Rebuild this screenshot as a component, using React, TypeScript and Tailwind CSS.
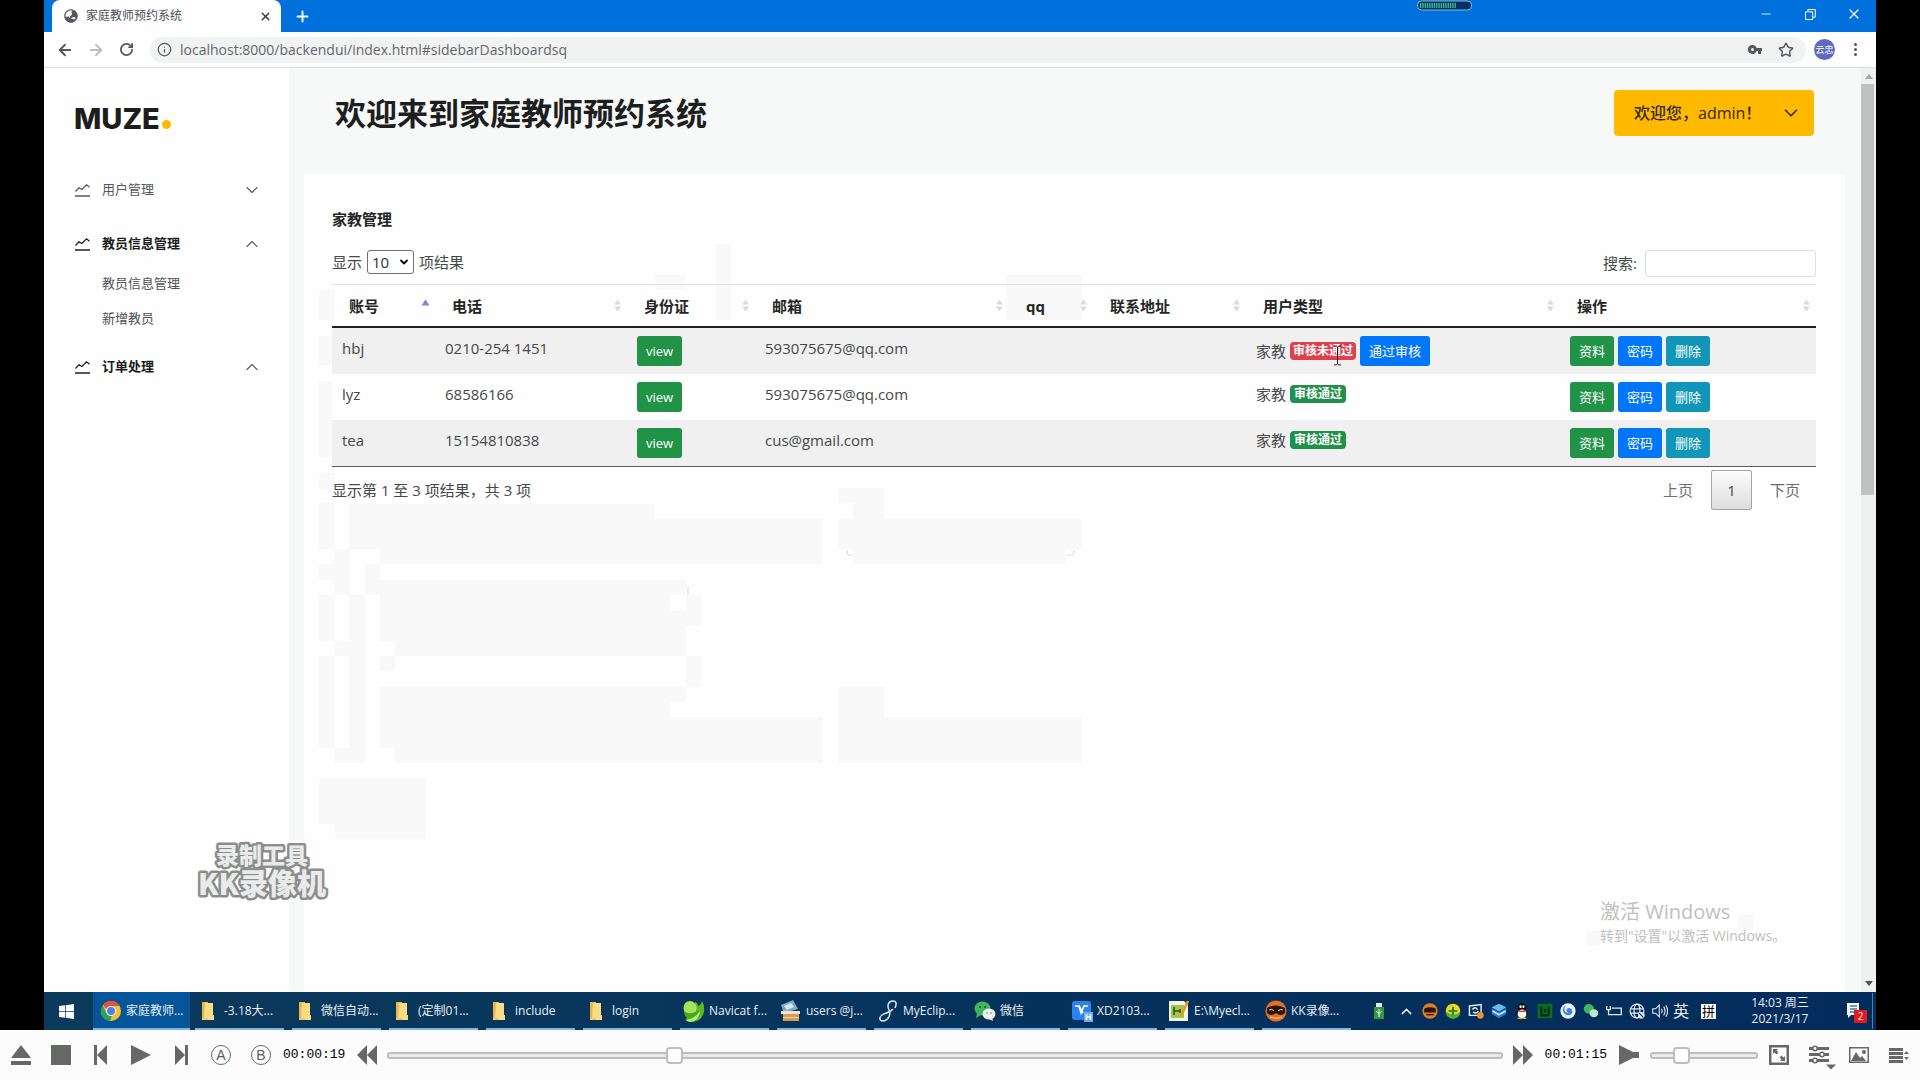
import React from "react";
import {
  ArrowLeft,
  ArrowRight,
  RotateCw,
  Info,
  Plus,
  X,
  Minus,
  Star,
  ChevronDown,
  ChevronUp,
} from "lucide-react";
import { FaWindows, FaGlobeAsia } from "react-icons/fa";

/* ---------- Browser window ---------- */

function TitleBar() {
  return (
    <div className="relative flex h-8 shrink-0 items-stretch bg-[#0070dd] pl-2">
      <div className="flex w-[229px] items-center rounded-t-lg bg-[#fdfefd] pl-3 pr-2">
        <FaGlobeAsia className="size-[14px] text-[#55585c]" />
        <span className="ml-2 flex-1 text-xs text-[#4b4f54]">家庭教师预约系统</span>
        <button aria-label="关闭标签页" className="flex size-4 items-center justify-center text-[#3c4043]">
          <X size={13} strokeWidth={2.8} />
        </button>
      </div>
      <button aria-label="新标签页" className="ml-[11px] flex w-5 items-center justify-center text-white">
        <Plus size={17} strokeWidth={2.6} />
      </button>
      <svg className="absolute left-[1373px] top-0" width="55" height="11" viewBox="0 0 55 11" aria-hidden="true">
        <rect x="0.5" y="1" width="54" height="9" rx="4" fill="#06305f" stroke="#7fb7e6" />
        {Array.from({ length: 16 }, (_, i) => (
          <rect key={i} x={3 + i * 2.3} y="3" width="1.3" height="5" fill="#37c98a" />
        ))}
      </svg>
      <div className="ml-auto flex items-center pb-1 text-white">
        <button aria-label="最小化" className="flex w-11 justify-center">
          <Minus size={14} strokeWidth={1.4} />
        </button>
        <button aria-label="还原" className="flex w-11 justify-center">
          <svg width="11" height="11" viewBox="0 0 11 11" fill="none" stroke="currentColor">
            <path d="M.5 2.800h7.200v7.700H.5zM2.800 2.600V.5h7.500v7.700H8" />
          </svg>
        </button>
        <button aria-label="关闭" className="flex w-11 justify-center">
          <X size={16} strokeWidth={1.8} />
        </button>
      </div>
    </div>
  );
}

function AddressBar() {
  return (
    <div className="flex h-9 shrink-0 items-center border-b border-[#dcdfe0] bg-[#fdfefd] pl-3 pr-[11px] text-[#55585c]">
      <button aria-label="后退" className="flex w-[18px] justify-center">
        <ArrowLeft size={18} strokeWidth={2.4} />
      </button>
      <button aria-label="前进" className="ml-[13px] flex w-[18px] justify-center text-[#bbbdbe]">
        <ArrowRight size={18} strokeWidth={2.4} />
      </button>
      <button aria-label="刷新" className="ml-3 flex w-[18px] justify-center">
        <RotateCw size={15} strokeWidth={2.8} />
      </button>
      <div className="ml-[15px] flex h-[26px] flex-1 items-center rounded-full bg-[#f1f3f3] pr-1 pl-[7px]">
        <Info size={15} strokeWidth={2} />
        <input
          aria-label="地址"
          defaultValue="localhost:8000/backendui/index.html#sidebarDashboardsq"
          className="ml-2 flex-1 bg-transparent text-sm text-[#63676b] outline-none"
        />
        <svg width="14" height="9" viewBox="0 0 14 9" aria-hidden="true">
          <path
            d="M4.500 0a4.500 4.500 0 1 0 4.100 6H10v3h3V6h1V3H8.600A4.500 4.500 0 0 0 4.500 0zm0 3a1.500 1.500 0 1 1 0 3 1.500 1.500 0 0 1 0-3z"
            fill="currentColor"
            fillRule="evenodd"
          />
        </svg>
        <Star size={16} strokeWidth={2.2} className="ml-4 mr-2" />
      </div>
      <span className="ml-2 flex size-[21px] items-center justify-center rounded-full bg-[#5c6bc0] text-[9px] leading-none text-white">
        云忠
      </span>
      <button aria-label="菜单" className="ml-[10px] flex w-5 flex-col items-center gap-0.5">
        <span className="size-[3px] rounded-full bg-[#55585c]" />
        <span className="size-[3px] rounded-full bg-[#55585c]" />
        <span className="size-[3px] rounded-full bg-[#55585c]" />
      </button>
    </div>
  );
}

/* ---------- Sidebar ---------- */

function TrendIcon() {
  return (
    <svg width="15" height="13" viewBox="0 0 15 13" fill="none" stroke="currentColor" aria-hidden="true">
      <path d="M.5 7.500 4 3.800l3 1.700L11.500.8l3 2.400" strokeWidth="1.200" />
      <path d="M0 12h15" strokeWidth="1.500" />
    </svg>
  );
}

function NavItem({ label, open, active }: { label: string; open: boolean; active: boolean }) {
  return (
    <button
      className={
        active
          ? "flex h-6 w-full items-center text-left text-[13px] font-bold text-[#1b1d1c]"
          : "flex h-6 w-full items-center text-left text-[13px] text-[#55595a]"
      }
    >
      <TrendIcon />
      <span className="ml-3 flex-1">{label}</span>
      {open ? (
        <ChevronUp size={20} strokeWidth={1.3} className="text-[#55595a]" />
      ) : (
        <ChevronDown size={20} strokeWidth={1.3} className="text-[#55595a]" />
      )}
    </button>
  );
}

function Sidebar() {
  return (
    <nav className="w-[245px] shrink-0 bg-[#fdfefd] pl-[31px] pr-[27px]">
      <div className="-ml-px flex items-end pt-9">
        <span className="font-['Inter'] text-[29px] leading-[30px] font-extrabold text-[#1c1e1d]">MUZE</span>
        <span className="mb-[5px] ml-0.5 size-[9px] rounded-full bg-[#ffba00]" />
      </div>
      <div className="mt-11">
        <NavItem label="用户管理" open={false} active={false} />
      </div>
      <div className="mt-[30px]">
        <NavItem label="教员信息管理" open active />
        <ul className="mt-[15px] ml-[27px] text-[13px] text-[#4d5152]">
          <li>
            <a href="#list" className="block h-6 leading-6">教员信息管理</a>
          </li>
          <li className="mt-[11px]">
            <a href="#add" className="block h-6 leading-6">新增教员</a>
          </li>
        </ul>
      </div>
      <div className="mt-[25px]">
        <NavItem label="订单处理" open active />
      </div>
    </nav>
  );
}

/* ---------- Table ---------- */

type Sort = "asc" | "both";

function SortMark({ sort }: { sort: Sort }) {
  return sort === "asc" ? (
    <svg width="9" height="15" viewBox="0 0 9 15" aria-hidden="true">
      <path d="M.5 7.500h8l-4-6z" fill="#8085d0" />
    </svg>
  ) : (
    <svg width="9" height="15" viewBox="0 0 9 15" aria-hidden="true">
      <path d="M1 6.500h7l-3.500-5zM1 8.500h7l-3.500 5z" fill="#dadcdb" />
    </svg>
  );
}

const columns: { name: string; width: string; sort: Sort }[] = [
  { name: "账号", width: "w-[103px]", sort: "asc" },
  { name: "电话", width: "w-[192px]", sort: "both" },
  { name: "身份证", width: "w-[128px]", sort: "both" },
  { name: "邮箱", width: "w-[254px]", sort: "both" },
  { name: "qq", width: "w-[84px]", sort: "both" },
  { name: "联系地址", width: "w-[153px]", sort: "both" },
  { name: "用户类型", width: "w-[314px]", sort: "both" },
  { name: "操作", width: "w-auto", sort: "both" },
];

const rows = [
  { account: "hbj", phone: "0210-254 1451", mail: "593075675@qq.com", passed: false },
  { account: "lyz", phone: "68586166", mail: "593075675@qq.com", passed: true },
  { account: "tea", phone: "15154810838", mail: "cus@gmail.com", passed: true },
];

const tones = {
  green: "block h-[30px] rounded-[3px] bg-[#209347] px-[9px] text-[13px] leading-[30px] whitespace-nowrap text-white",
  blue: "block h-[30px] rounded-[3px] bg-[#0076fb] px-[9px] text-[13px] leading-[30px] whitespace-nowrap text-white",
  teal: "block h-[30px] rounded-[3px] bg-[#1196b8] px-[9px] text-[13px] leading-[30px] whitespace-nowrap text-white",
};

function Btn({ tone, children }: { tone: keyof typeof tones; children: React.ReactNode }) {
  return <button className={tones[tone]}>{children}</button>;
}

function TeacherTable() {
  return (
    <table className="mt-[7px] w-full table-fixed border-separate border-spacing-0 border-b border-[#5b5d5c] text-[15px] leading-6 text-[#454948]">
      <thead>
        <tr>
          {columns.map((c) => (
            <th
              key={c.name}
              className={`${c.width} h-11 border-t border-b-2 border-t-[#dfe1e0] border-b-[#1f2120] p-0 text-left text-[#232625]`}
            >
              <div className="flex items-center justify-between pr-[5px] pl-[17px]">
                <span>{c.name}</span>
                <SortMark sort={c.sort} />
              </div>
            </th>
          ))}
        </tr>
      </thead>
      <tbody className="[&_td]:h-[46px] [&_td]:px-[10px] [&_td]:pt-2 [&_td]:pb-2 [&_td]:align-top">
        {rows.map((r, i) => (
          <tr key={r.account} className={i % 2 === 0 ? "bg-[#eff0ef]" : "bg-[#fdfefd]"}>
            <td>{r.account}</td>
            <td>{r.phone}</td>
            <td>
              <Btn tone="green">view</Btn>
            </td>
            <td>{r.mail}</td>
            <td />
            <td />
            <td>
              <div className="flex items-center gap-1">
                <span>家教</span>
                {r.passed ? (
                  <span className="rounded bg-[#20914a] px-1 text-[12px] leading-[18px] font-bold whitespace-nowrap text-white">审核通过</span>
                ) : (
                  <>
                    <span className="rounded bg-[#e0404d] px-[3px] text-[12px] leading-[18px] font-bold whitespace-nowrap text-white">审核未通过</span>
                    <Btn tone="blue">通过审核</Btn>
                  </>
                )}
              </div>
            </td>
            <td>
              <div className="flex gap-1">
                <Btn tone="green">资料</Btn>
                <Btn tone="blue">密码</Btn>
                <Btn tone="teal">删除</Btn>
              </div>
            </td>
          </tr>
        ))}
      </tbody>
    </table>
  );
}

/* Faint shading behind the panel's content */
const patches: [number, number, number, number][] = [
  [319, 290, 335, 320], [319, 336, 335, 365], [319, 381, 335, 457], [319, 473, 335, 489],
  [319, 503, 335, 549], [349, 504, 655, 519], [349, 519, 822, 549], [380, 549, 822, 564],
  [335, 549, 349, 595], [319, 564, 335, 580], [365, 564, 380, 595],
  [380, 580, 686, 595], [380, 595, 670, 611], [380, 611, 686, 641], [395, 641, 686, 656],
  [319, 595, 335, 641], [349, 595, 365, 763], [335, 641, 349, 656], [319, 656, 335, 748],
  [335, 748, 349, 763], [686, 595, 701, 626], [686, 656, 701, 687], [380, 656, 395, 671],
  [380, 687, 686, 702], [380, 702, 670, 717], [380, 717, 822, 748], [395, 748, 822, 763],
  [838, 488, 884, 503], [853, 503, 884, 519], [838, 519, 1082, 549], [853, 549, 1066, 564],
  [838, 687, 884, 717], [838, 717, 1082, 763], [319, 778, 426, 824], [335, 824, 426, 839],
  [716, 244, 731, 320], [655, 275, 685, 290], [1006, 275, 1082, 320],
  [1587, 931, 1600, 946], [1738, 915, 1753, 931],
];

function Patches() {
  return (
    <svg className="pointer-events-none absolute top-0 left-0" width="1541" height="818" viewBox="304 174 1541 818" aria-hidden="true">
      {patches.map(([a, b, c, d]) => (
        <rect key={`${a}-${b}`} x={a} y={b} width={c - a} height={d - b} fill="#f8f9f8" />
      ))}
      <path d="M847 550v3q0 2 2 2h3M1074 550v3q0 2-2 2h-5M688 586v9" fill="none" stroke="#d9dbda" />
    </svg>
  );
}

function Content() {
  return (
    <main className="flex min-w-0 flex-1 flex-col bg-[#f7f8f8] pl-[15px]">
      <header className="flex h-[106px] shrink-0 items-start justify-between pr-[47px] pl-[31px]">
        <h1 className="mt-[25px] text-[31px] leading-10 font-bold text-[#1d1f1e]">欢迎来到家庭教师预约系统</h1>
        <button className="mt-[22px] flex h-[46px] w-[200px] items-center justify-between rounded bg-[#ffba00] pr-3 pl-5 text-[16px] font-medium text-[#33290a]">
          <span>欢迎您，admin！</span>
          <ChevronDown size={22} strokeWidth={1.8} />
        </button>
      </header>
      <section className="relative mr-4 flex-1 bg-[#fdfefd] pt-[33px] pr-[29px] pl-7 text-[15px] text-[#454948]">
        <Patches />
        <div className="relative">
          <h2 className="text-[15px] leading-6 font-bold text-[#232625]">家教管理</h2>
          <div className="mt-[19px] flex items-start justify-between">
            <label className="flex items-center gap-[5px]">
              显示
              <span className="relative flex">
                <select
                  defaultValue="10"
                  className="h-6 w-[47px] appearance-none rounded-[3px] border border-[#6f7271] bg-[#fdfefd] pl-1 text-[15px] leading-5 text-[#2d302f]"
                >
                  <option>10</option>
                  <option>25</option>
                </select>
                <ChevronDown size={12} strokeWidth={3.6} className="pointer-events-none absolute top-1.5 right-1 text-black" />
              </span>
              项结果
            </label>
            <label className="flex items-center gap-2">
              搜索:
              <input type="search" className="h-[27px] w-[171px] rounded-[3px] border border-[#dfe1e0] bg-[#fdfefd] px-2" />
            </label>
          </div>
          <TeacherTable />
          <div className="mt-[3px] flex items-center justify-between">
            <p>显示第 1 至 3 项结果，共 3 项</p>
            <div className="mr-4 flex items-center text-[#6b6e6d]">
              <button>上页</button>
              <button className="mx-[18px] h-10 w-[41px] rounded-[2px] border border-[#a3a5a4] bg-linear-to-b from-[#fcfdfc] to-[#dcdddc] text-[#454948]">
                1
              </button>
              <button>下页</button>
            </div>
          </div>
        </div>
      </section>
    </main>
  );
}

function Scrollbar() {
  return (
    <div className="flex w-[15px] shrink-0 flex-col items-center bg-[#eff0f0] py-1.5" aria-hidden="true">
      <svg width="8" height="5" viewBox="0 0 8 5"><path d="M0 5h8L4 0z" fill="#a5a7a6" /></svg>
      <span className="mt-[5px] mr-0.5 h-[411px] w-[13px] bg-[#c0c1c1]" />
      <svg className="mt-auto" width="8" height="5" viewBox="0 0 8 5"><path d="M0 0h8L4 5z" fill="#505251" /></svg>
    </div>
  );
}

/* ---------- Taskbar ---------- */

function Svg({ children, w = 22 }: { children: React.ReactNode; w?: number }) {
  return (
    <svg width={w} height={w} viewBox="0 0 22 22" aria-hidden="true">
      {children}
    </svg>
  );
}

const chrome = (
  <Svg>
    <circle cx="11" cy="11" r="10" fill="#fbc02d" />
    <path d="M11 1a10 10 0 0 1 8.700 5H11a5 5 0 0 0-4.600 3L3 5A10 10 0 0 1 11 1z" fill="#e2513f" />
    <path d="M2.600 5.600 6.600 13a5 5 0 0 0 5.400 2.900L10 21A10 10 0 0 1 2.600 5.600z" fill="#2ea254" />
    <circle cx="11" cy="11" r="5" fill="#fff" />
    <circle cx="11" cy="11" r="4" fill="#4a80e8" />
  </Svg>
);
const folder = (
  <Svg>
    <path d="M4 2h6v16H4z" fill="#e9b64c" />
    <path d="M7 3h8v12h1v5H6z" fill="#fbdc86" />
    <path d="M4 18h6v2H4z" fill="#f4c964" />
  </Svg>
);
const navicat = (
  <Svg>
    <path d="M12 2q3 1 3 4 3-1 4-5 3 5 2 11-2 8-9 9.500Q6 23 2.500 20 6 14 12 11z" fill="#5fb829" />
    <ellipse cx="7" cy="8" rx="6.500" ry="7" fill="#a3e65c" />
    <path d="M1 11q5 5 15-1-2 8-10 9Q1 17 1 11z" fill="#4aa51f" />
    <path d="M3 20q9-1 14-9-1 9-8 10.500-4 1-6-1.500z" fill="#b9ef7d" />
  </Svg>
);
const users = (
  <Svg>
    <path d="m1 5 12-5 5 9L4 13z" fill="#7fa9c9" />
    <path d="m4 6 7-3 3 4-7 3z" fill="#d7e6ef" />
    <path d="M1 11h19v3H1z" fill="#f1e3c8" />
    <path d="M3 14h16v7H3z" fill="#d39b55" />
    <path d="M3 17h16v1H3z" fill="#f4d9a8" />
  </Svg>
);
const eclipse = (
  <Svg>
    <path d="M18 8q3-7-2-7c-5 0-6 5-4 9s0 10-6 11c-4 0-4-4-1-6s9-3 11-6" fill="none" stroke="#d7e7f6" strokeWidth="1.500" />
  </Svg>
);
const wechat = (
  <Svg>
    <ellipse cx="8.500" cy="8.500" rx="8" ry="7" fill="#3fb560" />
    <path d="m3 13-1 5 5-3z" fill="#3fb560" />
    <circle cx="6" cy="7" r="1" fill="#195c2d" />
    <circle cx="11" cy="7" r="1" fill="#195c2d" />
    <ellipse cx="15" cy="14" rx="6.500" ry="5.500" fill="#eef1ef" />
    <path d="m18 17 1 4-4-2z" fill="#eef1ef" />
    <circle cx="13" cy="13" r=".8" fill="#777" />
    <circle cx="17" cy="13" r=".8" fill="#777" />
  </Svg>
);
const wps = (
  <Svg>
    <rect x="1" y="1" width="19" height="19" rx="3" fill="#2b83ee" />
    <path d="M4 6h4l2 7 3-7h4M8 6l4 7" fill="none" stroke="#fff" strokeWidth="1.600" />
    <rect x="13" y="12" width="9" height="10" fill="#6fa8f5" />
    <path d="M15.500 14v6M19.500 14v6M15.500 17h4" fill="none" stroke="#fff" strokeWidth="1.500" />
  </Svg>
);
const notepad = (
  <Svg>
    <path d="M1 1h15l4 4v16H1z" fill="#f3f5ea" />
    <path d="M3 5h13v13H3z" fill="#a5c84a" />
    <path d="M6 7v8M7 11h4M12 9v4" stroke="#2f4a18" strokeWidth="1.500" />
    <path d="m20 1-7 15" stroke="#e09a2b" strokeWidth="2.500" />
  </Svg>
);
const kk = (
  <Svg>
    <circle cx="11" cy="11" r="10.500" fill="#e2701f" />
    <path d="M2 8q9-5 18 0v5q-4 4-9 0-5 4-9 0z" fill="#25150c" />
    <path d="M4 10q3-2 5 1M13 11q3-3 5-1M5 17q6 3 12 0" stroke="#ffd29a" fill="none" />
  </Svg>
);

const tasks: [React.ReactNode, string][] = [
  [folder, "-3.18大..."],
  [folder, "微信自动..."],
  [folder, "(定制01..."],
  [folder, "include"],
  [folder, "login"],
  [navicat, "Navicat f..."],
  [users, "users @j..."],
  [eclipse, "MyEclip..."],
  [wechat, "微信"],
  [wps, "XD2103..."],
  [notepad, "E:\\Myecl..."],
  [kk, "KK录像..."],
];

const trayIcons: React.ReactNode[] = [
  <Svg w={16}>
    <circle cx="11" cy="11" r="10.500" fill="#e2801f" />
    <path d="M3 8q8-4 16 0v5H3z" fill="#25150c" />
    <path d="M6 16h10" stroke="#25150c" strokeWidth="2" />
  </Svg>,
  <Svg w={16}>
    <circle cx="11" cy="11" r="10" fill="#f4d51e" />
    <path d="M1 12a10 10 0 0 0 20 0q-8 8-20 0z" fill="#4fae35" />
    <path d="M11 5v12M5 11h12" stroke="#2f8a2a" strokeWidth="3" />
  </Svg>,
  <Svg w={16}>
    <path d="M2 4 18 2v15H2z" fill="none" stroke="#e4ecf3" strokeWidth="2" />
    <path d="M6 9q4-5 7 0M14 11q-3 5-7 1" fill="none" stroke="#e4ecf3" strokeWidth="2" />
    <circle cx="17" cy="17" r="4.500" fill="#f0932a" />
  </Svg>,
  <Svg w={16}>
    <path d="m11 1 10 5-10 6L1 6z" fill="#6db7f6" />
    <path d="M1 7v8l10 6 10-6V7l-10 6z" fill="#2a78dc" />
    <path d="m2 11 9 5 9-5" fill="none" stroke="#d9ecff" strokeWidth="2" />
  </Svg>,
  <Svg w={16}>
    <ellipse cx="11" cy="7" rx="6" ry="7" fill="#111" />
    <path d="M3 17q0-7 5-8h6q5 1 5 8l-3-2-5 6-5-6z" fill="#111" />
    <ellipse cx="11" cy="15" rx="6" ry="6" fill="#f5f5f5" />
    <path d="M6 10q5 3 10 0" stroke="#dc3a2c" strokeWidth="2" fill="none" />
    <ellipse cx="9" cy="5" rx="1.500" ry="2" fill="#fff" />
    <ellipse cx="13" cy="5" rx="1.500" ry="2" fill="#fff" />
    <path d="M5 21h12" stroke="#f1a62a" strokeWidth="2" />
  </Svg>,
  <Svg w={16}>
    <rect x="1" y="1" width="20" height="20" fill="#0b6b22" />
    <path d="M6 5v12h10M16 5v12M11 8v5" stroke="#052c10" strokeWidth="3" fill="none" />
  </Svg>,
  <Svg w={16}>
    <circle cx="11" cy="11" r="10.500" fill="#e9f1fb" />
    <path d="M8 3q-5 3-4 8 2 6 8 6 5-1 5-6-1-4-5-4-4 1-3 4 1 2 3 2-5 1-6-3 0-4 2-7z" fill="#4a7fe0" />
  </Svg>,
  <Svg w={16}>
    <ellipse cx="8" cy="8" rx="7" ry="6.500" fill="#3fb560" />
    <ellipse cx="15" cy="14" rx="6" ry="5.500" fill="#bfe8ca" />
  </Svg>,
  <Svg w={16}>
    <path d="M8 7h13v9H8M1 4v5h5V4M3.500 9v7H8" fill="none" stroke="#e4ecf3" strokeWidth="1.800" />
  </Svg>,
  <Svg w={16}>
    <g fill="none" stroke="#e4ecf3" strokeWidth="1.600">
      <circle cx="11" cy="11" r="9.500" />
      <ellipse cx="11" cy="11" rx="4" ry="9.500" />
      <path d="M2 8h18M2 14h12" />
    </g>
    <circle cx="17" cy="17" r="4.500" fill="#e4ecf3" />
    <path d="m14 14 6 6" stroke="#06325c" strokeWidth="1.500" />
  </Svg>,
  <Svg w={16}>
    <path d="M1 8h4l5-5v16l-5-5H1zM13 8q2 3 0 6M16 5q4 6 0 12M19 3q5 8 0 16" fill="none" stroke="#e4ecf3" strokeWidth="1.500" />
  </Svg>,
];

function Taskbar() {
  return (
    <div className="flex h-[38px] shrink-0 items-stretch bg-linear-to-r from-[#0b3a5c] to-[#032c5c] text-xs text-[#e8eff5]">
      <button aria-label="开始" className="flex w-[49px] items-center justify-center pr-1 text-white">
        <FaWindows className="size-[17px]" />
      </button>
      <button className="flex w-[97px] items-center gap-1 border-b-2 border-[#7ab8ec] bg-[#045599] pt-0.5 pl-[7px] whitespace-nowrap">
        {chrome}
        家庭教师...
      </button>
      <div className="ml-[5px] flex gap-2">
        {tasks.map(([icon, label]) => (
          <button key={label} className="flex w-[89px] items-center gap-1 border-b-2 border-[#7ab8ec] pt-0.5 pl-[3px] whitespace-nowrap">
            {icon}
            {label}
          </button>
        ))}
      </div>
      <div className="ml-auto flex items-center">
        <svg width="10" height="16" viewBox="0 0 10 16" aria-hidden="true">
          <path d="M2 0h6v4H2z" fill="#e4ecf3" />
          <path d="M0 4h10v12H0z" fill="#2e9a3b" />
          <path d="M5 6v8M2 8l3 3 3-3" stroke="#fff" fill="none" />
        </svg>
        <ChevronUp size={17} strokeWidth={2} className="ml-3.5" />
        <div className="ml-[7px] flex gap-[7px]">
          {trayIcons.map((icon, i) => (
            <span key={i}>{icon}</span>
          ))}
        </div>
        <span className="ml-[5px] text-base leading-none">英</span>
        <span className="ml-3 flex size-[15px] items-center justify-center bg-white text-[13px] leading-none text-black">拼</span>
        <div className="ml-[35px] w-[58px] text-center leading-4">
          <div>14:03 周三</div>
          <div>2021/3/17</div>
        </div>
        <button aria-label="2 条新通知" className="relative ml-9 h-6 w-[22px]">
          <svg width="22" height="22" viewBox="0 0 22 22" aria-hidden="true">
            <path d="M2 3h12v12H6l-3 3v-3H2z" fill="#f4f7fa" />
            <path d="M5 6h7M5 9h7M5 12h4" stroke="#06325c" />
          </svg>
          <span className="absolute right-0 bottom-0 size-[13px] bg-[#e11b1b] text-[10px] leading-[13px]">2</span>
        </button>
        <span className="mr-[3px] ml-[5px] h-9 w-px bg-[#5b7fa3]" />
      </div>
    </div>
  );
}

/* ---------- Overlays on the desktop ---------- */

function Overlays() {
  return (
    <>
      <svg className="pointer-events-none absolute top-[838px] left-[150px]" width="136" height="68" viewBox="0 0 136 68">
        <g
          fill="#e9ebea"
          stroke="#8b8e8c"
          strokeWidth="5"
          strokeLinejoin="round"
          paintOrder="stroke"
          fontWeight="900"
          className="font-['Noto_Sans_CJK_SC',sans-serif]"
        >
          <text x="68" y="26" fontSize="23" textAnchor="middle">录制工具</text>
          <text x="68" y="57" fontSize="29" textAnchor="middle">KK录像机</text>
        </g>
      </svg>
      <div className="pointer-events-none absolute top-[898px] left-[1556px] whitespace-nowrap text-[#bfc1c0]">
        <p className="text-xl leading-7">激活 Windows</p>
        <p className="text-sm leading-5">转到"设置"以激活 Windows。</p>
      </div>
      <svg className="pointer-events-none absolute top-[345px] left-[1289px]" width="9" height="21" viewBox="0 0 9 21" aria-hidden="true">
        <path d="M1 1q3 0 3.500 1Q5 1 8 1M4.500 2v17M1 20q3 0 3.500-1Q5 20 8 20" fill="none" stroke="#222" />
      </svg>
    </>
  );
}

/* ---------- Player controls ---------- */

const rangeStyle =
  "h-4 cursor-pointer appearance-none bg-transparent [&::-webkit-slider-runnable-track]:h-[7px] [&::-webkit-slider-runnable-track]:rounded-[3px] [&::-webkit-slider-runnable-track]:border-2 [&::-webkit-slider-runnable-track]:border-[#bdbfbd] [&::-webkit-slider-runnable-track]:bg-[#e9ebe9] [&::-webkit-slider-thumb]:-mt-[7px] [&::-webkit-slider-thumb]:h-[17px] [&::-webkit-slider-thumb]:w-[17px] [&::-webkit-slider-thumb]:appearance-none [&::-webkit-slider-thumb]:rounded [&::-webkit-slider-thumb]:border-2 [&::-webkit-slider-thumb]:border-[#bdbfbd] [&::-webkit-slider-thumb]:bg-white";

function PlayerBtn({ label, children }: { label: string; children: React.ReactNode }) {
  return (
    <button aria-label={label} className="shrink-0">
      <svg width="20" height="20" viewBox="0 0 20 20" fill="#666866">
        {children}
      </svg>
    </button>
  );
}

function Player() {
  return (
    <div className="flex h-[50px] shrink-0 items-center bg-[#fcfcfc] pr-[11px] pl-[11px] font-['Liberation_Mono','Noto_Sans_CJK_SC',monospace] text-[13px] text-black">
      <div className="flex gap-5">
        <PlayerBtn label="打开"><path d="M10 0 20 13H0zM0 16h20v4H0z" /></PlayerBtn>
        <PlayerBtn label="停止"><path d="M0 0h20v20H0z" /></PlayerBtn>
        <PlayerBtn label="上一个"><path d="M3 0h3v20H3zM16 0v20L6 10z" /></PlayerBtn>
        <PlayerBtn label="播放"><path d="m0 0 20 10L0 20z" /></PlayerBtn>
        <PlayerBtn label="下一个"><path d="M14 0h3v20h-3zM4 0v20l10-10z" /></PlayerBtn>
        <button className="flex size-5 items-center justify-center rounded-full border border-[#666866] font-['Liberation_Sans'] text-[14px] leading-none text-[#5a5c5a]">A</button>
        <button className="flex size-5 items-center justify-center rounded-full border border-[#666866] font-['Liberation_Sans'] text-[14px] leading-none text-[#5a5c5a]">B</button>
      </div>
      <span className="mr-3 ml-3">00:00:19</span>
      <PlayerBtn label="快退"><path d="M10 0v20L0 10zM20 0v20L10 10z" /></PlayerBtn>
      <input aria-label="进度" type="range" min={0} max={1000} defaultValue={253} className={`${rangeStyle} mx-2.5 min-w-0 flex-1`} />
      <PlayerBtn label="快进"><path d="M0 0v20l10-10zM10 0v20l10-10z" /></PlayerBtn>
      <span className="mr-3 ml-3">00:01:15</span>
      <PlayerBtn label="音量"><path d="m0 0 14 7h6v6h-6L0 20z" /></PlayerBtn>
      <input aria-label="音量大小" type="range" min={0} max={100} defaultValue={24} className={`${rangeStyle} mx-[11px] w-[108px]`} />
      <div className="flex gap-5">
        <PlayerBtn label="全屏">
          <path d="M0 0h20v20H0zM2.500 2.500v15h15v-15z" fillRule="evenodd" />
          <path d="M4 4h5L7.500 5.500l2 2-2 2-2-2L4 9zM16 16h-5l1.500-1.500-2-2 2-2 2 2L16 11z" />
        </PlayerBtn>
        <button aria-label="设置" className="shrink-0">
          <svg width="20" height="20" viewBox="0 0 20 20" fill="#666866" overflow="visible">
            <path d="M0 2h20v3H0zM0 8h20v3H0zM0 14h20v3H0z" />
            <g fill="#fcfcfc" stroke="#666866" strokeWidth="1.500">
              <circle cx="6" cy="3.500" r="2.200" />
              <circle cx="13" cy="9.500" r="2.200" />
              <circle cx="6" cy="15.500" r="2.200" />
            </g>
            <path d="M17 19.500h10l-5 5z" />
          </svg>
        </button>
        <PlayerBtn label="截图">
          <path d="M0 2h20v16H0zM1.500 3.500v13h17v-13z" fillRule="evenodd" />
          <path d="m2 16 5-9 4 6 2-2 4 5z" />
          <circle cx="15" cy="7" r="2" />
        </PlayerBtn>
        <PlayerBtn label="播放列表">
          <path d="M0 3h14v3H0zM0 7h14v3H0zM0 11h14v3H0zM0 15h14v3H0zM15 9l2.500-3L20 9zM15 12l2.500 3 2.500-3z" />
        </PlayerBtn>
      </div>
    </div>
  );
}

export default function App() {
  return (
    <div className="flex h-screen flex-col bg-black font-['Open_Sans','Noto_Sans_CJK_SC',sans-serif]">
      <div className="relative mx-11 flex min-h-0 flex-1 flex-col overflow-hidden">
        <TitleBar />
        <AddressBar />
        <div className="flex min-h-0 flex-1">
          <Sidebar />
          <Content />
          <Scrollbar />
        </div>
        <Taskbar />
        <Overlays />
      </div>
      <Player />
    </div>
  );
}
